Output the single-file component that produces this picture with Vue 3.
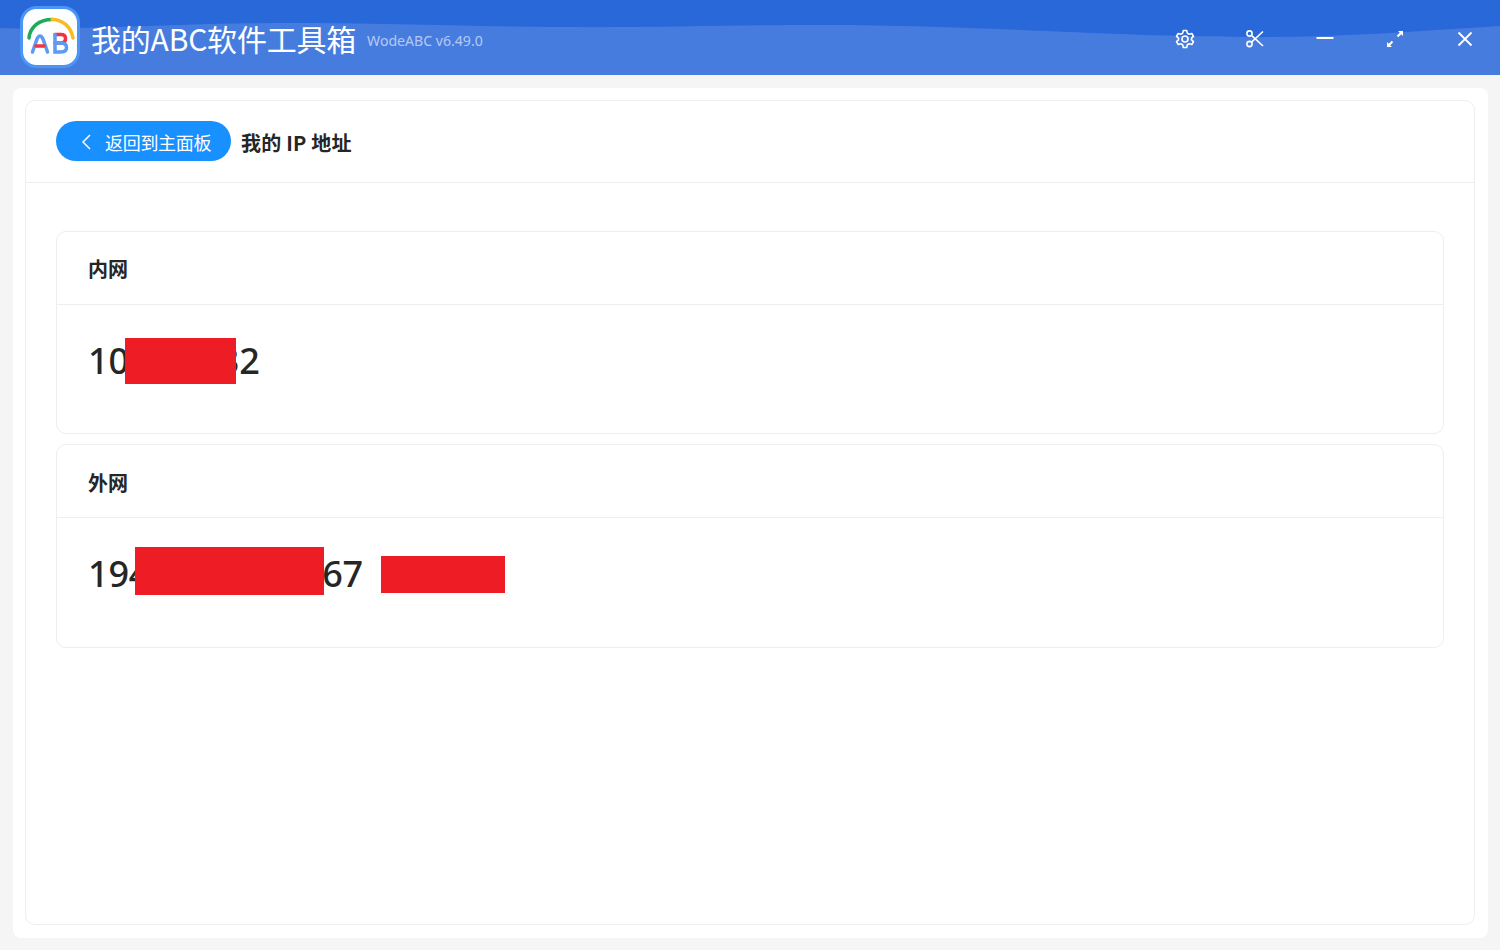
<script setup>
const cards = [
  { title: '内网', head: '10', tail: '32', box: 'inner' },
  { title: '外网', head: '194', tail: '67', box: 'outer', extra: true },
]
</script>

<template>
  <div class="app">
    <header class="bar">
      <svg class="wave" viewBox="0 0 1500 75" preserveAspectRatio="none" aria-hidden="true">
        <rect width="1500" height="75" fill="#477cdf" />
        <path d="M0 0H1500V26C1420 31 1340 37 1270 37C1130 37 1040 29 900 26C760 23 680 28 560 27C430 26 330 21 210 24C130 26 60 30 0 28Z" fill="#2968d9" />
      </svg>
      <div class="logo">
        <svg viewBox="0 0 60 62" width="60" height="62" aria-hidden="true">
          <rect x="1.500" y="1.500" width="57" height="59" rx="15" fill="#fdfeff" stroke="#4a95f5" stroke-width="3" />
          <path d="M9 32C10 21 19 13.500 32 13.500" fill="none" stroke="#1faa59" stroke-width="3.500" stroke-linecap="round" />
          <path d="M32 13.500C43 13.500 51 21 53 32" fill="none" stroke="#f7bc1f" stroke-width="3.500" stroke-linecap="round" />
          <path d="M12.500 46L17 33Q20 27 23 33L27.500 46" fill="none" stroke="#5c9bf2" stroke-width="3.500" stroke-linecap="round" />
          <path d="M16 40H24" stroke="#ef3340" stroke-width="3.500" stroke-linecap="round" />
          <path d="M35 28.500H41Q45.500 28.500 45.500 32.500Q45.500 37 41 37H35" fill="none" stroke="#ef3340" stroke-width="3.500" stroke-linecap="round" />
          <path d="M35 28.500V46H41Q46.500 46 46.500 41.500Q46.500 37 41 37H35" fill="none" stroke="#5c9bf2" stroke-width="3.500" stroke-linecap="round" />
        </svg>
      </div>
      <div class="app-name">我的ABC软件工具箱</div>
      <div class="app-version">WodeABC v6.49.0</div>
      <div class="win-actions">
        <button class="win-btn" aria-label="设置">
          <svg viewBox="0 0 20 20" width="20" height="20"><path d="M8.300 1.500H11.700L12.300 4.200L14.200 5.300L16.800 4.500L18.500 7.400L16.500 9.200V10.800L18.500 12.600L16.800 15.500L14.200 14.700L12.300 15.800L11.700 18.500H8.300L7.700 15.800L5.800 14.700L3.200 15.500L1.500 12.600L3.500 10.800V9.200L1.500 7.400L3.200 4.500L5.800 5.300L7.700 4.200Z" fill="none" stroke="#fff" stroke-width="1.600" stroke-linejoin="round" /><circle cx="10" cy="10" r="3" fill="none" stroke="#fff" stroke-width="1.600" /></svg>
        </button>
        <button class="win-btn" aria-label="截图">
          <svg viewBox="0 0 20 20" width="20" height="20"><circle cx="4.500" cy="4.500" r="2.600" fill="none" stroke="#fff" stroke-width="1.600" /><circle cx="4.500" cy="15" r="2.600" fill="none" stroke="#fff" stroke-width="1.600" /><path d="M6.500 6.300L18 17M6.500 13.200L18 2.500" fill="none" stroke="#fff" stroke-width="1.600" /></svg>
        </button>
        <button class="win-btn" aria-label="最小化">
          <svg viewBox="0 0 20 20" width="20" height="20"><path d="M1.500 9H18.500" stroke="#fff" stroke-width="2" /></svg>
        </button>
        <button class="win-btn" aria-label="最大化">
          <svg viewBox="0 0 20 20" width="20" height="20"><path d="M2.500 17.500L7.500 12.500M12.500 7.500L17.500 2.500" stroke="#fff" stroke-width="2" /><path d="M2 13V18H7ZM13 2H18V7Z" fill="#fff" /></svg>
        </button>
        <button class="win-btn" aria-label="关闭">
          <svg viewBox="0 0 20 20" width="20" height="20"><path d="M3.500 3.500L16.500 16.500M16.500 3.500L3.500 16.500" stroke="#fff" stroke-width="1.800" /></svg>
        </button>
      </div>
    </header>

    <main class="stage">
      <section class="panel">
        <div class="panel-head">
          <button class="back">
            <svg viewBox="0 0 12 18" width="12" height="18" aria-hidden="true"><path d="M10 2L3 9L10 16" fill="none" stroke="#fff" stroke-width="1.500" /></svg>
            <span>返回到主面板</span>
          </button>
          <h1 class="page-title">我的 IP 地址</h1>
        </div>
        <div class="panel-body">
          <article v-for="c in cards" :key="c.title" class="card">
            <h2 class="card-title">{{ c.title }}</h2>
            <div class="card-body">
              <div class="value">
                <span>{{ c.head }}</span>
                <i class="redact" :class="c.box"></i>
                <span>{{ c.tail }}</span>
                <i v-if="c.extra" class="redact place"></i>
              </div>
            </div>
          </article>
        </div>
      </section>
    </main>
  </div>
</template>

<style>
html, body { margin: 0; background: #f5f5f5; }
</style>

<style scoped>
.app {
  width: 1500px;
  height: 950px;
  overflow: hidden;
  background: #f5f5f5;
  font-family: "Noto Sans", "Noto Sans CJK SC", sans-serif;
  color: #262626;
}
.bar {
  position: relative;
  height: 75px;
  display: flex;
  align-items: center;
  padding-left: 20px;
  box-sizing: border-box;
  color: #fff;
}
.wave { position: absolute; inset: 0; width: 100%; height: 100%; }
.logo { position: relative; width: 60px; height: 62px; margin-top: -1px; }
.logo svg { display: block; }
.app-name {
  position: relative;
  margin-left: 11px;
  font-family: "Noto Sans CJK SC", sans-serif;
  font-size: 30px;
  line-height: 40px;
  letter-spacing: -0.2px;
  white-space: nowrap;
}
.app-version {
  position: relative;
  margin-left: 11px;
  margin-top: 6px;
  font-size: 14.100px;
  color: rgba(255, 255, 255, 0.6);
  white-space: nowrap;
}
.win-actions {
  position: relative;
  margin-left: auto;
  display: flex;
}
.win-btn {
  width: 70px;
  height: 30px;
  margin-top: 3px;
  padding: 0;
  border: 0;
  background: none;
  display: flex;
  align-items: center;
  justify-content: center;
}
.stage {
  height: 875px;
  box-sizing: border-box;
  padding: 13px 12px 12px 13px;
  display: flex;
}
.panel {
  flex: 1;
  background: #fff;
  border-radius: 8px;
  padding: 12px;
  display: flex;
  flex-direction: column;
  box-sizing: border-box;
  position: relative;
}
.panel::before {
  content: "";
  position: absolute;
  inset: 12px 13px 13px 12px;
  border: 1px solid #eeeeee;
  border-radius: 10px;
  pointer-events: none;
}
.panel-head {
  height: 83px;
  box-sizing: border-box;
  padding: 21px 31px 0;
  margin-right: 1px;
  display: flex;
  align-items: flex-start;
  gap: 10px;
  border-bottom: 1px solid #eeeeee;
}
.back {
  width: 175px;
  height: 40px;
  border: 0;
  border-radius: 20px;
  background: #1890ff;
  color: #fff;
  display: flex;
  align-items: center;
  padding: 2px 0 0 24px;
  gap: 13px;
  font-family: "Noto Sans CJK SC", sans-serif;
  font-size: 18px;
  letter-spacing: -0.3px;
}
.back svg { flex: none; }
.page-title {
  margin: 0;
  font-family: "Noto Sans CJK SC", sans-serif;
  font-size: 20px;
  font-weight: 700;
  line-height: 44px;
  letter-spacing: 0.2px;
  white-space: nowrap;
}
.panel-body {
  padding: 48px 32px 0 31px;
  display: flex;
  flex-direction: column;
  gap: 10px;
}
.card {
  border: 1px solid #eeeeee;
  border-radius: 10px;
  height: 203px;
  box-sizing: border-box;
}
.card + .card { height: 204px; }
.card-title {
  margin: 0;
  height: 73px;
  box-sizing: border-box;
  padding-left: 31px;
  border-bottom: 1px solid #eeeeee;
  font-family: "Noto Sans CJK SC", sans-serif;
  font-size: 20px;
  font-weight: 700;
  line-height: 74px;
}
.card + .card .card-title { line-height: 76px; }
.card-body { padding: 33px 31px 0; }
.value {
  display: flex;
  align-items: center;
  height: 46px;
  font-size: 36px;
  font-weight: 500;
  line-height: 46px;
  letter-spacing: -0.2px;
}
.redact { display: block; flex: none; background: #ee1c25; position: relative; z-index: 1; }
.inner { width: 111px; height: 46px; margin-left: -4px; margin-right: -17px; }
.outer { width: 189px; height: 48px; margin-left: -14px; margin-right: -2px; margin-top: -6px; }
.place { width: 124px; height: 37px; margin-left: 18px; }
</style>
